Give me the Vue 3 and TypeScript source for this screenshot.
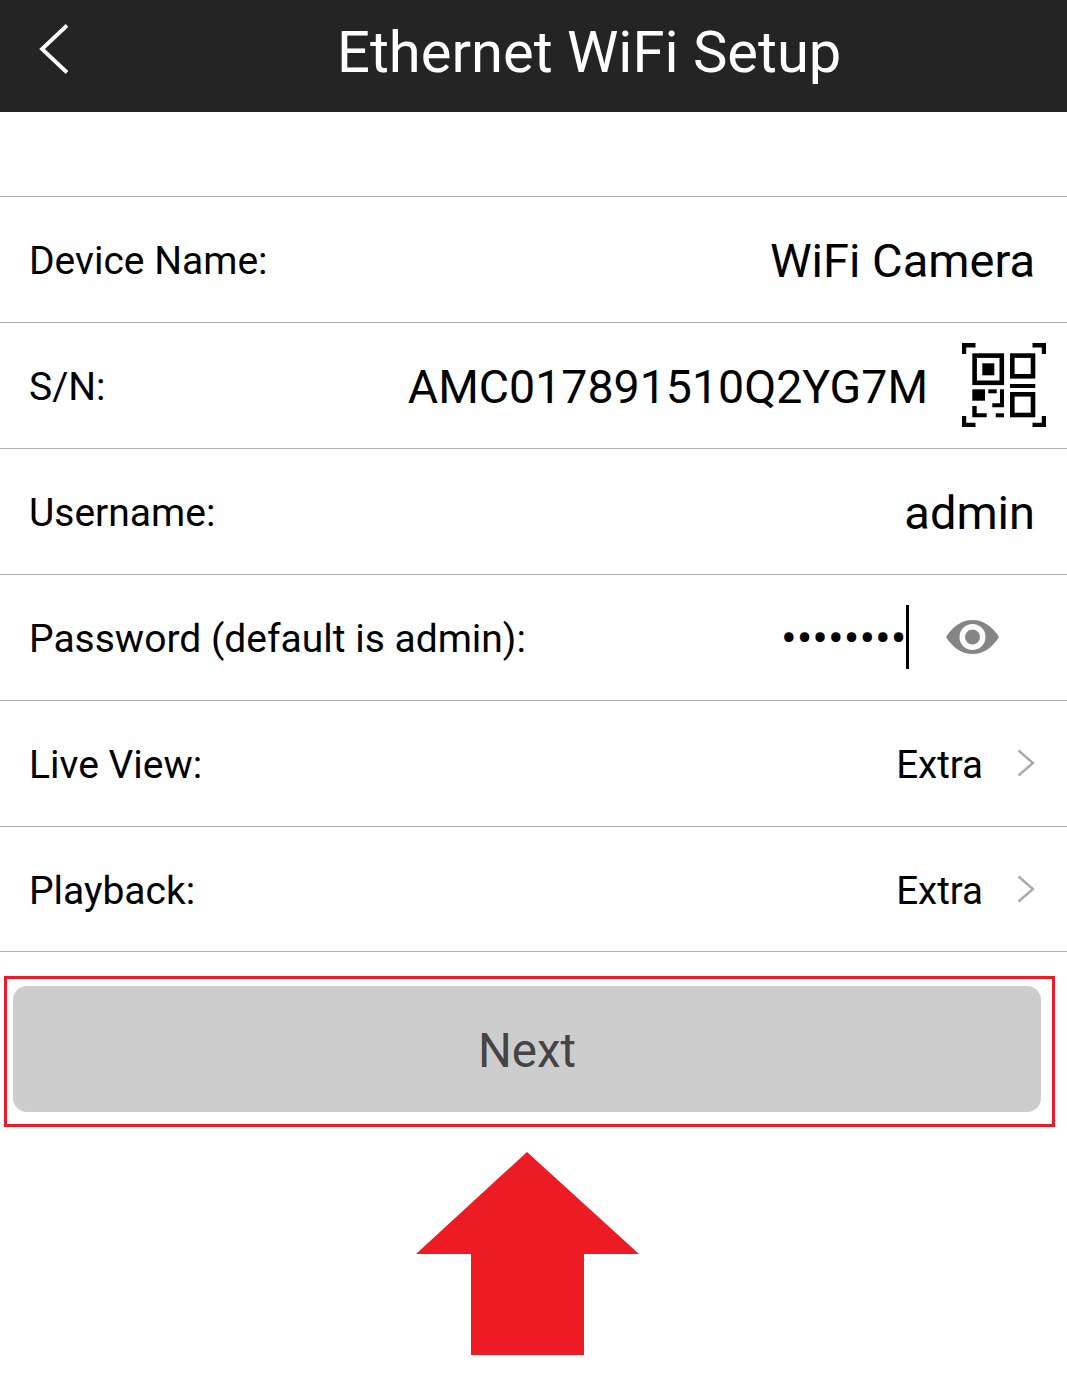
<script setup lang="ts">
const tail = [
  { label: 'Live View:', value: 'Extra' },
  { label: 'Playback:', value: 'Extra' },
]
</script>

<template>
  <div class="page">
    <header class="bar">
      <svg class="back" viewBox="0 0 30 50" width="30" height="50" aria-hidden="true">
        <path d="M28 1.5 L3 25 L28 48.5" fill="none" stroke="#fff" stroke-width="3.8" />
      </svg>
      <h1 class="title">Ethernet WiFi Setup</h1>
    </header>

    <section class="form">
      <div class="row">
        <span class="label">Device Name:</span>
        <span class="value">WiFi Camera</span>
      </div>
      <div class="row">
        <span class="label">S/N:</span>
        <span class="value sn">AMC017891510Q2YG7M</span>
        <svg class="qr" viewBox="0 0 84 84" width="84" height="84" aria-hidden="true">
          <g fill="none" stroke="#000" stroke-width="4">
            <path d="M2 11V2.3H13.5M70.5 2.3H82V11M2 73V82H13.5M70.5 82H82V73" stroke-width="4.4" />
            <rect x="12.6" y="12.6" width="27.2" height="27.2" stroke-width="4.6" />
            <rect x="50.3" y="12.6" width="20.7" height="20.7" stroke-width="4.6" />
            <rect x="50.3" y="51.3" width="20.7" height="20.7" stroke-width="4.6" />
          </g>
          <g fill="#000">
            <rect x="20.3" y="20.3" width="12" height="12" />
            <rect x="48" y="41" width="25.3" height="4" />
            <rect x="10.3" y="46.3" width="12.7" height="11.4" />
            <rect x="26.3" y="46.3" width="8.4" height="4" />
            <path d="M38 46.3h4v18H30.3v-4H38z" />
            <path d="M10.3 63h4.4v7.3h10v4H10.3z" />
            <rect x="33.7" y="70.3" width="8.3" height="4" />
          </g>
        </svg>
      </div>
      <div class="row">
        <span class="label">Username:</span>
        <span class="value">admin</span>
      </div>
      <div class="row">
        <span class="label">Password (default is admin):</span>
        <span class="secret">••••••••<i class="caret"></i></span>
        <svg class="eye" viewBox="0 0 53 34" width="53" height="34" aria-hidden="true">
          <path d="M0 17C7 6 16 0 26.500 0S46 6 53 17C46 28 37 34 26.500 34S7 28 0 17Z" fill="#858585" />
          <circle cx="26.500" cy="17" r="13" fill="#fff" />
          <circle cx="26.500" cy="17" r="7.500" fill="#858585" />
        </svg>
      </div>
      <div v-for="item in tail" :key="item.label" class="row">
        <span class="label">{{ item.label }}</span>
        <span class="option">{{ item.value }}</span>
        <svg class="chev" viewBox="0 0 18 28" width="18" height="28" aria-hidden="true">
          <path d="M1.500 1.500 L16 14 L1.500 26.500" fill="none" stroke="#aaa" stroke-width="2.400" />
        </svg>
      </div>
    </section>

    <div class="highlight">
      <button class="next" type="button">Next</button>
    </div>

    <svg class="arrow" viewBox="0 0 223 203" width="223" height="203" aria-hidden="true">
      <path d="M111 0 L223 102 H168 V203 H55 V102 H0 Z" fill="#ed1c24" />
    </svg>
  </div>
</template>

<style>
html, body { margin: 0; background: #fff; }
</style>

<style scoped>
.page {
  width: 1067px;
  height: 1373px;
  background: #fff;
  font-family: Roboto, "Liberation Sans", sans-serif;
  color: #000;
  display: flex;
  flex-direction: column;
  overflow: hidden;
}
.bar {
  height: 112px;
  background: #242424;
  display: flex;
  align-items: center;
  position: relative;
  flex: none;
  box-sizing: border-box;
  padding-bottom: 8px;
}
.back { position: absolute; left: 39px; top: 24px; }
.title {
  margin: 0 0 0 337px;
  font-size: 57.9px;
  font-weight: 400;
  color: #fff;
  white-space: nowrap;
}
.form {
  margin-top: 84px;
  border-top: 1px solid #b0b0b0;
  flex: none;
}
.row {
  height: 125px;
  border-bottom: 1px solid #b0b0b0;
  display: flex;
  align-items: center;
  padding: 0 32px 0 29px;
}
.row:last-child { height: 123px; padding-top: 1px; }
.label { font-size: 39px; flex: 1; white-space: nowrap; padding-top: 2px; }
.value { font-size: 47px; white-space: nowrap; padding-top: 2px; }
.sn { margin-right: 34px; font-size: 46.5px; }
.qr { margin: 0 -11px 2px 0; flex: none; }
.secret {
  font-size: 46.5px;
  display: flex;
  align-items: center;
  position: relative;
  margin-right: 39px;
  white-space: nowrap;
}
.caret {
  position: absolute;
  right: -2px;
  top: -6px;
  bottom: -4px;
  width: 3px;
  background: #000;
}
.eye { margin: 0 36.500px 2px 0; flex: none; }
.option { font-size: 38.5px; margin-right: 34px; padding-top: 1px; }
.chev { flex: none; margin-right: 0; margin-bottom: 2px; }
.highlight {
  margin: 24px 12px 0 4px;
  height: 151px;
  box-sizing: border-box;
  border: 3px solid #ed1c24;
  padding: 7px 11px 12px 6px;
  flex: none;
}
.next {
  width: 100%;
  height: 100%;
  border: 0;
  border-radius: 14px;
  background: #cdcdcd;
  color: #444;
  font-family: inherit;
  font-size: 47.5px;
  padding: 4px 0 0;
}
.arrow { margin: 25px 0 0 416px; flex: none; display: block; }
</style>
